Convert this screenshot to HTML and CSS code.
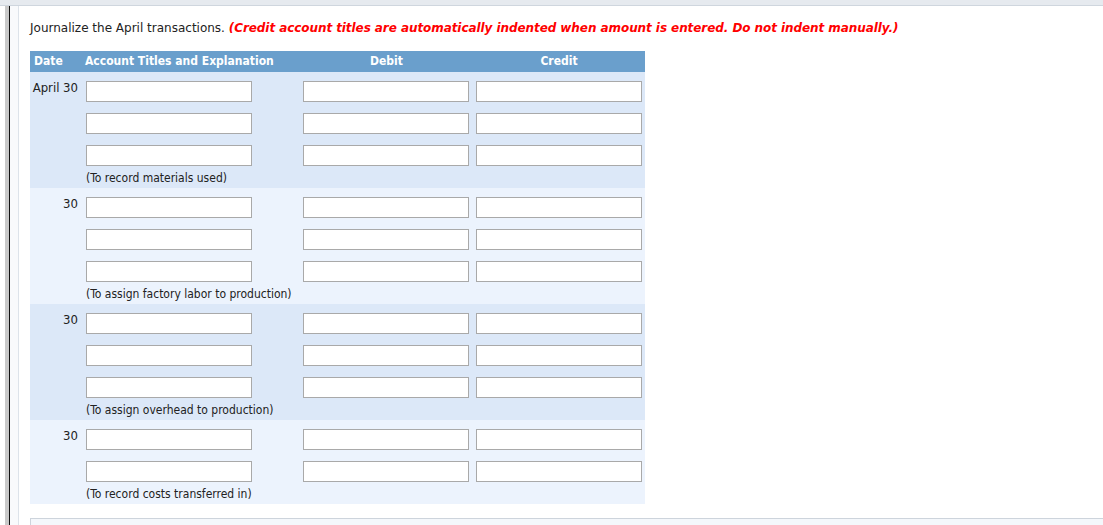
FILE: index.html
```html
<!DOCTYPE html>
<html>
<head>
<meta charset="utf-8">
<link rel="stylesheet" href="styles.css">
</head>
<body>
<div class="topbar"></div>
<div class="frame">
  <div class="rail"></div>
  <div class="rail2"></div>
  <div class="content">
    <p class="prompt">Journalize the April transactions. <span class="note">(Credit account titles are automatically indented when amount is entered. Do not indent manually.)</span></p>
    <div class="journal">
      <div class="head">
        <div class="c-date">Date</div>
        <div class="c-acct">Account Titles and Explanation</div>
        <div class="c-debit">Debit</div>
        <div class="c-credit">Credit</div>
      </div>

      <div class="group odd">
        <div class="rows">
          <div class="row">
            <div class="c-date">April 30</div>
            <div class="c-acct"><input class="field" type="text"></div>
            <div class="c-debit"><input class="field" type="text"></div>
            <div class="c-credit"><input class="field" type="text"></div>
          </div>
          <div class="row">
            <div class="c-date"></div>
            <div class="c-acct"><input class="field" type="text"></div>
            <div class="c-debit"><input class="field" type="text"></div>
            <div class="c-credit"><input class="field" type="text"></div>
          </div>
          <div class="row">
            <div class="c-date"></div>
            <div class="c-acct"><input class="field" type="text"></div>
            <div class="c-debit"><input class="field" type="text"></div>
            <div class="c-credit"><input class="field" type="text"></div>
          </div>
        </div>
        <div class="expl">(To record materials used)</div>
      </div>

      <div class="group even">
        <div class="rows">
          <div class="row">
            <div class="c-date">30</div>
            <div class="c-acct"><input class="field" type="text"></div>
            <div class="c-debit"><input class="field" type="text"></div>
            <div class="c-credit"><input class="field" type="text"></div>
          </div>
          <div class="row">
            <div class="c-date"></div>
            <div class="c-acct"><input class="field" type="text"></div>
            <div class="c-debit"><input class="field" type="text"></div>
            <div class="c-credit"><input class="field" type="text"></div>
          </div>
          <div class="row">
            <div class="c-date"></div>
            <div class="c-acct"><input class="field" type="text"></div>
            <div class="c-debit"><input class="field" type="text"></div>
            <div class="c-credit"><input class="field" type="text"></div>
          </div>
        </div>
        <div class="expl">(To assign factory labor to production)</div>
      </div>

      <div class="group odd">
        <div class="rows">
          <div class="row">
            <div class="c-date">30</div>
            <div class="c-acct"><input class="field" type="text"></div>
            <div class="c-debit"><input class="field" type="text"></div>
            <div class="c-credit"><input class="field" type="text"></div>
          </div>
          <div class="row">
            <div class="c-date"></div>
            <div class="c-acct"><input class="field" type="text"></div>
            <div class="c-debit"><input class="field" type="text"></div>
            <div class="c-credit"><input class="field" type="text"></div>
          </div>
          <div class="row">
            <div class="c-date"></div>
            <div class="c-acct"><input class="field" type="text"></div>
            <div class="c-debit"><input class="field" type="text"></div>
            <div class="c-credit"><input class="field" type="text"></div>
          </div>
        </div>
        <div class="expl">(To assign overhead to production)</div>
      </div>

      <div class="group even">
        <div class="rows">
          <div class="row">
            <div class="c-date">30</div>
            <div class="c-acct"><input class="field" type="text"></div>
            <div class="c-debit"><input class="field" type="text"></div>
            <div class="c-credit"><input class="field" type="text"></div>
          </div>
          <div class="row">
            <div class="c-date"></div>
            <div class="c-acct"><input class="field" type="text"></div>
            <div class="c-debit"><input class="field" type="text"></div>
            <div class="c-credit"><input class="field" type="text"></div>
          </div>
        </div>
        <div class="expl">(To record costs transferred in)</div>
      </div>
    </div>
    <div class="nextbox"></div>
  </div>
</div>
</body>
</html>
```

FILE: styles.css
```css
html, body {
  margin: 0;
  padding: 0;
  background: #ffffff;
}
body {
  font-family: "DejaVu Sans", Verdana, sans-serif;
  font-stretch: condensed;
  color: #222222;
  font-size: 12px;
}
.topbar {
  height: 5px;
  background: #e6eaef;
  border-bottom: 1px solid #cfd6de;
}
.frame {
  display: flex;
  min-height: 519px;
}
.rail {
  margin-left: 5px;
  width: 4px;
  background: #c9c9c9;
  border-right: 1px solid #111111;
}
.rail2 {
  width: 8px;
  background: #f9fafc;
  border-right: 1px solid #dde3ea;
}
.content {
  flex: 1;
  padding-left: 11px;
  padding-top: 14px;
}
.prompt {
  margin: 0;
  height: 16px;
  line-height: 16px;
  font-size: 12px;
  font-stretch: normal;
}
.note {
  color: #ff0000;
  font-weight: bold;
  font-style: italic;
  letter-spacing: -0.07px;
}
.journal {
  margin-top: 15px;
  width: 615px;
}
.head, .row {
  display: grid;
  grid-template-columns: 53px 217px 173px 172px;
}
.head {
  background: #6a9fcc;
  color: #ffffff;
  font-weight: bold;
  height: 21px;
  line-height: 21px;
  font-size: 12px;
}
.head .c-date { padding-left: 4px; }
.head .c-acct { padding-left: 2px; }
.head .c-debit, .head .c-credit { text-align: center; }
.group {
  padding-top: 9px;
}
.group.odd { background: #dce8f8; }
.group.even { background: #ecf3fd; }
.rows {
  display: flex;
  flex-direction: column;
  gap: 11px;
}
.row {
  height: 21px;
}
.row .c-date {
  text-align: right;
  padding-right: 5px;
  line-height: 14px;
  font-size: 13px;
}
.field {
  display: block;
  box-sizing: border-box;
  width: 166px;
  height: 21px;
  margin: 0 0 0 3px;
  border: 1px solid #a9a9a9;
  background: #ffffff;
  padding: 0 3px;
  font: inherit;
}
.expl {
  padding-left: 56px;
  padding-top: 2px;
  height: 20px;
  line-height: 20px;
  font-size: 12px;
}
.nextbox {
  margin-top: 14px;
  height: 20px;
  border: 1px solid #cdd4dc;
  border-right: none;
  background: #f4f7fb;
}
```
